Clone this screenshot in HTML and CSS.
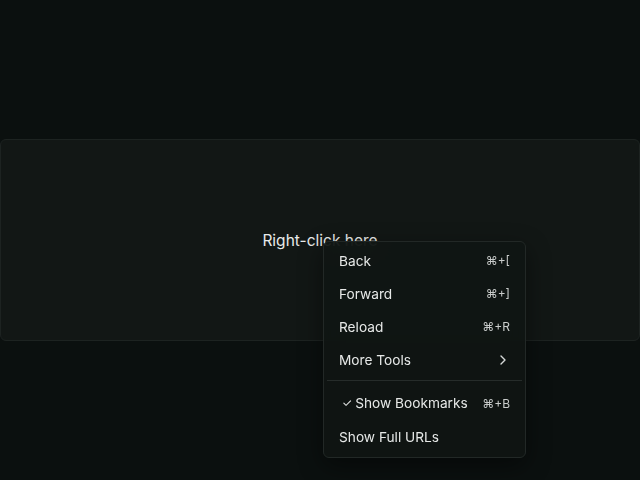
FILE: index.html
```html
<!DOCTYPE html>
<html>
<head>
<meta charset="utf-8">
<link rel="stylesheet" href="styles.css">
</head>
<body>
<div class="page">
  <div class="area">
    <span class="label">Right-click here</span>
  </div>
  <div class="menu">
    <div class="item"><span class="name">Back</span><span class="key">⌘+[</span></div>
    <div class="item"><span class="name">Forward</span><span class="key">⌘+]</span></div>
    <div class="item"><span class="name">Reload</span><span class="key">⌘+R</span></div>
    <div class="item"><span class="name">More Tools</span>
      <svg class="chev" width="8" height="12" viewBox="0 0 8 12"><path d="M2 2 L6 6 L2 10" fill="none" stroke="#d6d9d8" stroke-width="1.4" stroke-linecap="round" stroke-linejoin="round"/></svg>
    </div>
    <div class="sep"></div>
    <div class="item lower checked"><span class="name"><span class="check">✓</span>Show Bookmarks</span><span class="key">⌘+B</span></div>
    <div class="item lower"><span class="name">Show Full URLs</span></div>
  </div>
</div>
</body>
</html>
```

FILE: styles.css
```css
html, body {
  margin: 0;
  padding: 0;
  background: #0b100f;
  height: 100%;
}
body {
  font-family: Inter, "Noto Sans", sans-serif;
  color: #e6e8e7;
}
.page {
  position: relative;
  width: 640px;
  height: 480px;
  padding-top: 139px;
  box-sizing: border-box;
}
.area {
  height: 202px;
  box-sizing: border-box;
  border: 1px solid #1d2321;
  border-radius: 6px;
  background: #121715;
  display: flex;
  align-items: center;
  justify-content: center;
}
.label {
  font-size: 15.5px;
  color: #e8eae9;
}
.menu {
  position: absolute;
  left: 323px;
  top: 241px;
  width: 203px;
  height: 217px;
  box-sizing: border-box;
  padding: 2px 0;
  border: 1px solid #222826;
  border-radius: 6px;
  background: rgba(16, 21, 19, 0.9);
  backdrop-filter: blur(12px);
  box-shadow: 0 8px 24px rgba(0, 0, 0, 0.45);
}
.item {
  height: 33px;
  display: flex;
  align-items: center;
  justify-content: space-between;
  padding: 0 15px;
  font-size: 13.7px;
  color: #e6e8e7;
}
.item.lower {
  height: 34px;
}
.checked .name {
  margin-left: 3px;
}
.check {
  font-size: 11.5px;
  margin-right: 3px;
  position: relative;
  top: -1px;
}
.key {
  font-size: 12px;
  color: #c9cccb;
}
.chev {
  margin-right: 3px;
}
.sep {
  height: 1px;
  background: #262c2a;
  margin: 4px 3px 5px 3px;
}
```
